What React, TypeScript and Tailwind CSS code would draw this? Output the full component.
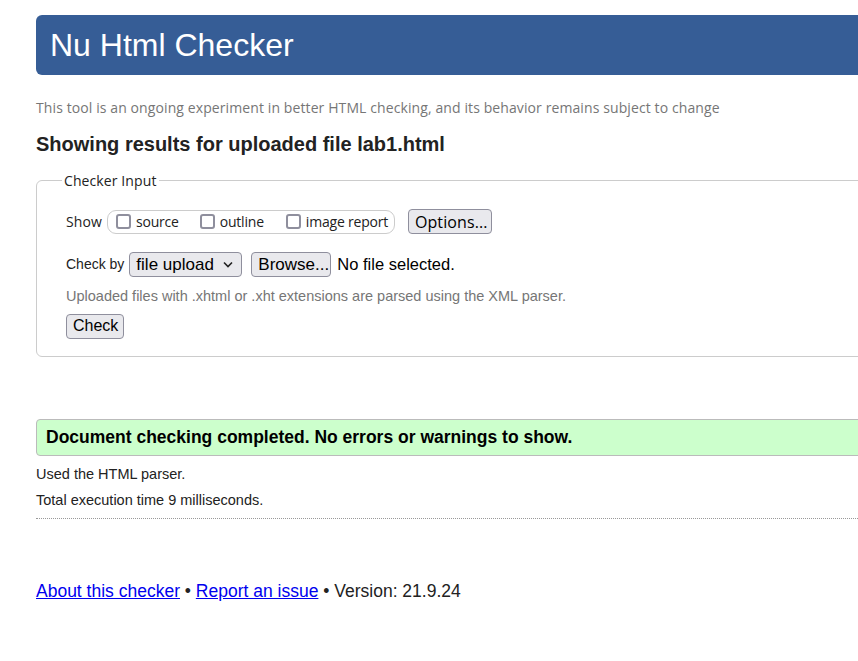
const arial = { fontFamily: '"Liberation Sans", Arial, sans-serif' };

function Box({ label }: { label: string }) {
  return (
    <label className="flex items-center gap-[5px] shrink-0 whitespace-nowrap">
      <span className="w-[15px] h-[15px] border-2 border-[#8f8f9d] rounded-[3px] bg-white" />
      <span>{label}</span>
    </label>
  );
}

function Btn({ children, className = "" }: { children: React.ReactNode; className?: string }) {
  return (
    <button
      className={`h-[25px] px-[6px] bg-[#e9e9ed] border border-[#8f8f9d] rounded-[4px] text-black leading-none whitespace-nowrap ${className}`}
    >
      {children}
    </button>
  );
}

export default function App() {
  return (
    <div className="w-full overflow-hidden bg-white" style={arial}>
      <div className="ml-[36px] mr-[-40px] pt-[15px] pb-[40px]">
        <h1 className="h-[60px] bg-[#365d96] rounded-[6px] flex items-center pl-[14px] text-white text-[32px]">
          Nu Html Checker
        </h1>

        <p className="mt-[22px] text-[14px] text-[#767676] font-['Open_Sans'] tracking-[0.1px]">
          This tool is an ongoing experiment in better HTML checking, and its behavior remains subject to change
        </p>

        <h2 className="mt-[11px] text-[20px] font-bold text-[#222]">
          Showing results for uploaded file lab1.html
        </h2>

        <fieldset className="mt-[11px] border border-[#cccccc] rounded-[6px] pl-[29px] pt-[18px] pb-[17px]">
          <legend className="ml-[-4px] px-[2px] text-[14px] text-[#222] font-['Open_Sans'] tracking-[0.1px]">
            Checker Input
          </legend>

          <div className="flex items-center text-[14px] text-[#222] font-['Open_Sans'] tracking-[0.1px]">
            <span>Show</span>
            <div className="ml-[5px] h-[24px] w-[288px] shrink-0 border border-[#cccccc] rounded-[9px] flex items-center pl-[8px] tracking-[-0.2px]">
              <Box label="source" />
              <span className="w-[21px] shrink-0" />
              <Box label="outline" />
              <span className="w-[22px] shrink-0" />
              <Box label="image report" />
            </div>
            <Btn className="ml-[13px] font-['Open_Sans'] w-[84px] text-[16px]">Options...</Btn>
          </div>

          <div className="mt-[18px] flex items-center text-[14px] text-[#222]">
            <span>Check by</span>
            <div className="ml-[5px] h-[25px] w-[113px] bg-[#e9e9ed] border border-[#8f8f9d] rounded-[4px] flex items-center justify-between pl-[6px] pr-[8px] text-[17px] text-black">
              <span>file upload</span>
              <svg width="10" height="7" viewBox="0 0 10 7" fill="none">
                <path d="M1 1.5 L5 5.5 L9 1.5" stroke="#222" strokeWidth="1.6" />
              </svg>
            </div>
            <Btn className="ml-[9px] w-[80px] text-[17px]">Browse...</Btn>
            <span className="ml-[6px] text-[16.5px] text-black">No file selected.</span>
          </div>

          <p className="mt-[9px] text-[14.5px] text-[#767676]">
            Uploaded files with .xhtml or .xht extensions are parsed using the XML parser.
          </p>

          <Btn className="mt-[6px] w-[58px] text-[16px] px-0">Check</Btn>
        </fieldset>

        <div className="mt-[62px] h-[37px] bg-[#ccffcc] border border-[#bbbbbb] rounded-[4px] flex items-center pl-[9px] text-[17.5px] font-bold text-black">
          Document checking completed. No errors or warnings to show.
        </div>

        <p className="mt-[8px] text-[14.5px] leading-[20px] text-[#222]">Used the HTML parser.</p>
        <p className="mt-[6px] text-[14.5px] leading-[20px] text-[#222]">Total execution time 9 milliseconds.</p>
        <div className="mt-[8px] border-b border-dotted border-[#999]" />

        <p className="mt-[59px] text-[17.5px] text-[#222]">
          <a href="#" className="text-[#0000ee] underline">About this checker</a>
          {" • "}
          <a href="#" className="text-[#0000ee] underline">Report an issue</a>
          {" • Version: 21.9.24"}
        </p>
      </div>
    </div>
  );
}
